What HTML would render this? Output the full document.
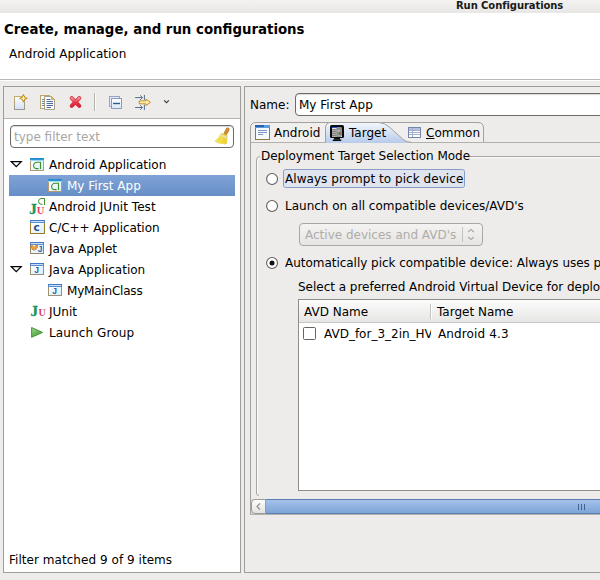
<!DOCTYPE html>
<html>
<head>
<meta charset="utf-8">
<title>Run Configurations</title>
<style>
html,body{margin:0;padding:0}
body{width:600px;height:580px;position:relative;overflow:hidden;background:#edeceb;
 font-family:"DejaVu Sans","Liberation Sans",sans-serif;font-size:12px;color:#000;line-height:14px}
.abs{position:absolute}
.t{position:absolute;white-space:nowrap;line-height:14px;height:14px}
#titlebar{left:0;top:0;width:600px;height:13px;background:linear-gradient(#f3f2f1,#e8e7e5)}
#title{left:456px;top:0px;letter-spacing:-.08px;font-weight:bold;font-size:10px;line-height:12px;color:#1a1a1a}
#banner{left:0;top:13px;width:600px;height:66px;background:#fff}
#bannerline{left:0;top:79px;width:600px;height:1px;background:#bcbab7}
#bannerline2{left:0;top:80px;width:600px;height:1px;background:#fff}
#h1{left:4px;top:22px;font-weight:bold;font-size:13.33px;line-height:16px;height:16px}
#h2{left:9px;top:47px}
.panel{border:1px solid #9f9d9a;box-sizing:border-box}
#left{left:3px;top:86px;width:238px;height:487px;background:#edeceb}
#leftwhite{left:1px;top:32px;width:235px;height:453px;background:#fff;border-top:1px solid #b5b3b0;margin-top:-1px}
#right{left:244px;top:86px;width:360px;height:487px}
.entry{border:1px solid #6c6b69;border-radius:4px;background:#fff;box-sizing:border-box;box-shadow:inset 0 1px 1px rgba(0,0,0,.16)}
.row{position:absolute;left:0;width:235px;height:21px}
.row .t{top:3px}
.sel{position:absolute;left:5px;width:227px;top:0;height:21px;background:linear-gradient(#83a6d8,#6b92c9)}
</style>
</head>
<body>
<div id="titlebar" class="abs"></div>
<div id="title" class="t">Run Configurations</div>
<div id="banner" class="abs"></div>
<div id="bannerline" class="abs"></div>
<div id="bannerline2" class="abs"></div>
<div id="h1" class="t">Create, manage, and run configurations</div>
<div id="h2" class="t">Android Application</div>

<!-- LEFT PANEL -->
<div id="left" class="abs panel"></div>
<div class="abs" style="left:4px;top:118px;width:236px;height:1px;background:#b4b2af"></div>
<div class="abs" style="left:4px;top:119px;width:236px;height:453px;background:#fff"></div>

<!-- toolbar icons -->
<svg class="abs" style="left:12px;top:92px" width="18" height="20" viewBox="0 0 18 20">
 <defs><linearGradient id="gdoc" x1="0" y1="0" x2="0" y2="1"><stop offset="0" stop-color="#ffffff"/><stop offset="1" stop-color="#d3e0f6"/></linearGradient>
 <linearGradient id="gdocb" x1="0" y1="0" x2="0" y2="1"><stop offset="0" stop-color="#c2ae73"/><stop offset="1" stop-color="#9c9686"/></linearGradient></defs>
 <rect x="2.5" y="4.5" width="10" height="13" fill="url(#gdoc)" stroke="url(#gdocb)"/>
 <path d="M11.400 2.400 L12.600 5.100 L15.300 6.300 L12.600 7.500 L11.400 10.200 L10.200 7.500 L7.500 6.300 L10.200 5.100 Z" fill="#d6a72a" stroke="#b8890f" stroke-width=".8"/>
 <path d="M11.400 4.300 V8.300 M9.400 6.300 H13.400" stroke="#fff6d0" stroke-width="1.100"/>
</svg>
<svg class="abs" style="left:38px;top:92px" width="20" height="20" viewBox="0 0 20 20">
 <rect x="2.5" y="3.5" width="9" height="13" fill="#f4f7fc" stroke="#b9a66f"/>
 <path d="M4 7.5h5M4 9.5h5M4 11.5h5M4 13.5h5" stroke="#6d86b3" stroke-width="1"/>
 <path d="M6.5 4.500 H13.500 L16.500 7.500 V17.500 H6.500 Z" fill="#fbfcfe" stroke="#a9a184"/>
 <path d="M13.5 4.500 L16.500 7.500 H13.500 Z" fill="#dcb35a" stroke="#c09a45" stroke-width=".6"/>
 <path d="M8.500 7.500h4M8.500 9.500h6.500M8.500 11.500h6.500M8.500 13.500h6.500M8.500 15.500h4.500" stroke="#4f6da3" stroke-width="1.100"/>
</svg>
<svg class="abs" style="left:67px;top:94px" width="17" height="16" viewBox="0 0 17 16">
 <defs><linearGradient id="gx" x1="0" y1="0" x2="0" y2="1"><stop offset="0" stop-color="#f78a94"/><stop offset=".5" stop-color="#ee3a4c"/><stop offset="1" stop-color="#dc2236"/></linearGradient></defs>
 <path d="M4.700 4.200 L12.300 11.800 M12.300 4.200 L4.700 11.800" stroke="#d22a3c" stroke-width="4" stroke-linecap="round"/>
 <path d="M4.700 4.200 L12.300 11.800 M12.300 4.200 L4.700 11.800" stroke="url(#gx)" stroke-width="2.600" stroke-linecap="round"/>
</svg>
<div class="abs" style="left:94px;top:93px;width:1px;height:18px;background:#b3b1ae"></div>
<div class="abs" style="left:95px;top:93px;width:1px;height:18px;background:#fbfbfa"></div>
<svg class="abs" style="left:107px;top:94px" width="18" height="17" viewBox="0 0 18 17">
 <defs><linearGradient id="gsq" x1="0" y1="0" x2="0" y2="1"><stop offset="0" stop-color="#ffffff"/><stop offset="1" stop-color="#dbe6f7"/></linearGradient></defs>
 <rect x="2.500" y="2.500" width="10" height="10" fill="#e4ebf8" stroke="#98a3c4"/>
 <rect x="4.500" y="4.500" width="10" height="10" fill="url(#gsq)" stroke="#8d99bd"/>
 <rect x="6" y="8.800" width="7" height="1.400" fill="#24599a"/>
</svg>
<svg class="abs" style="left:133px;top:93px" width="20" height="19" viewBox="0 0 20 19">
 <path d="M2.100 4.600h7M7.200 2.400l2.300 2.200L7.200 6.800M11.400 1.900v5" fill="none" stroke="#52708f" stroke-width="1"/>
 <path d="M2.100 14.500h7M7.200 12.300l2.300 2.200L7.200 16.700M11.400 11.700v5.300" fill="none" stroke="#52708f" stroke-width="1"/>
 <path d="M6.300 7.900h6.600V6.200L17.500 9.350 12.900 12.500V10.800H6.300Z" fill="#fdeebb" stroke="#c98d14" stroke-width="1"/>
</svg>
<svg class="abs" style="left:162px;top:98px" width="9" height="7" viewBox="0 0 9 7">
 <path d="M2.100 2.400 L4.500 4.600 L6.900 2.400" fill="none" stroke="#3a3a3a" stroke-width="1.150"/>
</svg>

<!-- filter box -->
<div class="abs entry" style="left:10px;top:125px;width:224px;height:23px"></div>
<div class="t" style="left:14px;top:130px;color:#a8a7a5">type filter text</div>
<svg class="abs" style="left:213px;top:126px" width="20" height="21" viewBox="0 0 20 21">
 <defs><linearGradient id="gbr" x1="0" y1="0" x2="1" y2="0"><stop offset="0" stop-color="#f6ea62"/><stop offset=".5" stop-color="#f3e047"/><stop offset="1" stop-color="#e9d03a"/></linearGradient></defs>
 <path d="M14.700 3.300 L12.200 8" stroke="#b07420" stroke-width="3.600" stroke-linecap="round"/>
 <path d="M14.700 3.300 L12.200 8" stroke="#cd9236" stroke-width="2.400" stroke-linecap="round"/>
 <path d="M8.400 7.200 L14.300 9.800 L14 13 L13.600 17.600 Q11.500 18.400 9.800 17.400 Q6 17.800 2 15.200 Q6.500 11.500 8.400 7.200 Z" fill="url(#gbr)" stroke="#e6cf3a" stroke-width=".6"/>
 <path d="M7.800 9.100 L14 11.600" stroke="#e9dcea" stroke-width="1.500"/>
 <path d="M8 11.500 L5 16 M10 12.300 L9 17 M12 13 L12.300 17.300" stroke="#e2c936" stroke-width=".6" fill="none"/>
</svg>

<!-- tree -->
<div class="abs" style="left:9px;top:175px;width:226px;height:21px;background:linear-gradient(#7fa3d6,#678ec6)"></div>

<svg class="abs" style="left:10px;top:160px" width="13" height="8" viewBox="0 0 13 8"><path d="M1.300 1.600 H11.200 L6.250 6.600 Z" fill="#fff" stroke="#000" stroke-width="1.250" stroke-linejoin="miter"/></svg>
<svg class="abs" style="left:10px;top:265px" width="13" height="8" viewBox="0 0 13 8"><path d="M1.300 1.600 H11.200 L6.250 6.600 Z" fill="#fff" stroke="#000" stroke-width="1.250" stroke-linejoin="miter"/></svg>

<svg width="0" height="0" style="position:absolute">
 <defs>
  <linearGradient id="gtb" x1="0" y1="0" x2="0" y2="1"><stop offset="0" stop-color="#1c84c6"/><stop offset=".55" stop-color="#2f9ad6"/><stop offset=".6" stop-color="#8fd6f0"/><stop offset="1" stop-color="#9fdcf2"/></linearGradient>
  <linearGradient id="gtb2" x1="0" y1="0" x2="0" y2="1"><stop offset="0" stop-color="#3b74c4"/><stop offset="1" stop-color="#5f92d6"/></linearGradient>
  <linearGradient id="gbody" x1="0" y1="0" x2="1" y2="1"><stop offset="0" stop-color="#ffffff"/><stop offset="1" stop-color="#d6eefb"/></linearGradient>
  <g id="icoAndroid">
   <rect x=".5" y="2.500" width="13" height="10" fill="url(#gbody)" stroke="#b89a72"/>
   <rect x="0" y="0" width="14" height="3" fill="url(#gtb)"/>
   <path d="M10.500 11 V4.300 H7.300 C4.600 4.300 3.600 6 3.600 7.450 C3.600 8.900 4.600 10.600 7.300 10.600 H8.600" fill="none" stroke="#3d8f28" stroke-width="1.100"/>
  </g>
  <g id="icoJava">
   <rect x=".5" y="2.500" width="13" height="9" fill="url(#gbody)" stroke="#9c8f78"/>
   <rect x="0" y="0" width="14" height="3" fill="url(#gtb2)"/>
   <rect x="1" y="1" width="12" height="1" fill="#dbe8f8" opacity=".9"/>
   <text x="6.700" y="10.300" font-family="'Liberation Sans',sans-serif" font-weight="bold" font-size="8.500" fill="#2b5da6" text-anchor="middle">J</text>
  </g>
  <g id="icoC">
   <rect x=".5" y="2.500" width="14" height="11" fill="url(#gbody)" stroke="#9c7c26"/>
   <rect x="0" y="0" width="15" height="3" fill="url(#gtb2)"/>
   <rect x="1" y="1" width="13" height="1" fill="#dbe8f8" opacity=".9"/>
   <text x="6.700" y="11.200" font-family="'DejaVu Sans','Liberation Sans',sans-serif" font-weight="bold" font-size="10.500" fill="#2a4f86" text-anchor="middle">c</text>
  </g>
 </defs>
</svg>

<svg class="abs" style="left:30px;top:158px" width="14" height="13"><use href="#icoAndroid"/></svg>
<svg class="abs" style="left:48px;top:179px" width="14" height="13"><use href="#icoAndroid"/></svg>
<!-- android junit -->
<svg class="abs" style="left:28px;top:196px" width="19" height="21" viewBox="0 0 19 21">
 <text x="1.300" y="18" font-family="'Liberation Serif',serif" font-weight="bold" font-size="15" fill="#1b9457" stroke="#1b9457" stroke-width=".35">J</text>
 <text x="8.800" y="18" font-family="'Liberation Serif',serif" font-weight="bold" font-size="10.500" fill="#ee3f59">U</text>
 <path d="M16.500 9 V2.500 H13 Q10.500 2.800 10.500 5.400 Q10.500 8 13 8.300 H14.500" fill="#fff" stroke="#3d8f28" stroke-width="1"/>
</svg>
<svg class="abs" style="left:30px;top:220px" width="15" height="14"><use href="#icoC"/></svg>
<!-- java applet -->
<svg class="abs" style="left:30px;top:242px" width="14" height="12" viewBox="0 0 14 12">
 <rect x=".5" y="2.500" width="13" height="9" fill="url(#gbody)" stroke="#94846a"/>
 <rect x="0" y="0" width="14" height="3" fill="url(#gtb2)"/>
 <rect x="1" y="1" width="12" height="1" fill="#dbe8f8" opacity=".9"/>
 <path d="M.8 3.300 h1.800 l.9 1.300 h1.200 l.9 -1.300 h2 v2.300 l-1.400 .7 v1.300 h-1.300 l-.8 .9 l-.8 -.9 h-1.300 v-1.300 l-1.200 -.7 Z" fill="#eaa243" stroke="#b0691c" stroke-width=".6"/>
 <rect x="3.300" y="3" width="1.600" height="1.300" fill="#fff"/>
 <text x="10.200" y="10.300" font-family="'Liberation Sans',sans-serif" font-weight="bold" font-size="8.500" fill="#2b5da6" text-anchor="middle">J</text>
</svg>
<svg class="abs" style="left:30px;top:263px" width="14" height="12"><use href="#icoJava"/></svg>
<svg class="abs" style="left:48px;top:284px" width="14" height="12"><use href="#icoJava"/></svg>
<!-- junit -->
<svg class="abs" style="left:29px;top:300px" width="19" height="19" viewBox="0 0 19 19">
 <text x="1.500" y="16" font-family="'Liberation Serif',serif" font-weight="bold" font-size="15" fill="#1b9457" stroke="#1b9457" stroke-width=".35">J</text>
 <text x="9.500" y="16" font-family="'Liberation Serif',serif" font-weight="bold" font-size="10" fill="#d8475c">U</text>
</svg>
<!-- launch group -->
<svg class="abs" style="left:30px;top:326px" width="15" height="13" viewBox="0 0 15 13">
 <defs><linearGradient id="gplay" x1="0" y1="0" x2=".6" y2="1"><stop offset="0" stop-color="#a2da8c"/><stop offset="1" stop-color="#469a38"/></linearGradient></defs>
 <path d="M1.600 1.500 L12.500 6.400 L1.600 11.300 Z" fill="url(#gplay)" stroke="#44963a" stroke-width="1" stroke-linejoin="round"/>
</svg>

<div class="t" style="left:49px;top:158px">Android Application</div>
<div class="t" style="left:67px;top:179px;color:#fff">My First App</div>
<div class="t" style="left:49px;top:200px;letter-spacing:.06px">Android JUnit Test</div>
<div class="t" style="left:49px;top:221px;letter-spacing:-.08px">C/C++ Application</div>
<div class="t" style="left:49px;top:242px">Java Applet</div>
<div class="t" style="left:49px;top:263px">Java Application</div>
<div class="t" style="left:67px;top:284px;letter-spacing:-.2px">MyMainClass</div>
<div class="t" style="left:49px;top:305px">JUnit</div>
<div class="t" style="left:49px;top:326px;letter-spacing:.12px">Launch Group</div>

<div class="t" style="left:9px;top:553px;letter-spacing:.045px">Filter matched 9 of 9 items</div>

<!-- RIGHT PANEL -->
<div id="right" class="abs panel"></div>
<div class="t" style="left:250px;top:98px">Name:</div>
<div class="abs entry" style="left:295px;top:93px;width:320px;height:23px"></div>
<div class="t" style="left:299px;top:98px">My First App</div>

<!-- tab folder -->
<svg class="abs" style="left:250px;top:122px" width="350" height="394" viewBox="0 0 350 394">
 <defs><linearGradient id="gtab" x1="0" y1="0" x2="0" y2="1"><stop offset="0" stop-color="#f4f7fc"/><stop offset="1" stop-color="#b7cbea"/></linearGradient></defs>
 <path d="M1 20 V6 Q1 1 6 1 H228 Q233 1 233 6 V20 Z" fill="#f0efee"/>
 <path d="M.5 392.500 V6 Q.5 .5 6 .5 H228 Q233.500 .5 233.500 6 V20.500" fill="none" stroke="#a3a19e"/>
 <path d="M1 20.500 H350" fill="none" stroke="#b3b1ae"/>
 <path d="M0 392.500 H350" fill="none" stroke="#b3b1ae"/>
 <path d="M75.500 21 V6 Q75.500 .5 81 .5 H128.500 Q134.500 .5 140 5.600 L153 17.300 Q156.500 20.500 162 20.500 V21 Z" fill="url(#gtab)"/>
 <path d="M75.500 21 V6 Q75.500 .5 81 .5 H128.500 Q134.500 .5 140 5.600 L153 17.300 Q156.500 20.500 162 20.500" fill="none" stroke="#a3a19e"/>
</svg>
<!-- tab: Android -->
<svg class="abs" style="left:255px;top:125px" width="15" height="15" viewBox="0 0 15 15">
 <rect x=".5" y="2.500" width="14" height="12" fill="#f3f9fe" stroke="#8c7a3e"/>
 <rect x="0" y="0" width="15" height="3" fill="#5d9be0"/>
 <rect x="0" y="0" width="9" height="2" fill="#2c5fae"/>
 <path d="M3 5.500h9M3 7.500h9M3 9.500h5" stroke="#7e97c6" stroke-width="1"/>
</svg>
<div class="t" style="left:274px;top:126px">Android</div>
<!-- tab: Target -->
<svg class="abs" style="left:330px;top:125px" width="15" height="16" viewBox="0 0 15 16">
 <rect x="0" y="0" width="14" height="13" rx="1.600" fill="#0a0a0a"/>
 <rect x="4" y="13" width="6" height="1.600" fill="#0a0a0a"/>
 <rect x="2.700" y="14.400" width="8.600" height="1.600" rx=".5" fill="#0a0a0a"/>
 <rect x="2" y="2" width="10" height="10" fill="#8c8c8c"/>
 <rect x="2" y="2" width="5" height="1.200" fill="#2456e0"/>
 <rect x="11" y="2" width="1" height="1.200" fill="#2456e0"/>
 <rect x="2" y="3.200" width="4.400" height="8.800" fill="#fff"/>
 <path d="M2 4.900h4.400M2 6.900h4.400M2 8.900h4.400M2 10.900h4.400" stroke="#1a1a1a" stroke-width=".9"/>
 <rect x="7.300" y="5" width="2.800" height="1.500" fill="#bdbdbd"/>
 <rect x="7" y="7.600" width="1.500" height="1.500" fill="#1fe01f"/>
 <rect x="9.100" y="7.600" width="1.500" height="1.500" fill="#f01616"/>
 <rect x="7.300" y="10.300" width="2.800" height="1" fill="#a9a9a9"/>
 <rect x="11" y="10.700" width="1" height="1" fill="#fff"/>
</svg>
<div class="t" style="left:349px;top:126px">Target</div>
<!-- tab: Common -->
<svg class="abs" style="left:408px;top:127px" width="13" height="11" viewBox="0 0 13 11">
 <rect x=".5" y=".5" width="12" height="10" fill="#fff" stroke="#7685ae"/>
 <rect x="1" y="1" width="11" height="2" fill="#b4bfda"/>
 <path d="M1 3.500h11M1 5.500h11M1 7.500h11M4.500 1v9" stroke="#a3afd0" stroke-width="1"/>
</svg>
<div class="t" style="left:426px;top:126px"><span style="text-decoration:underline">C</span>ommon</div>

<!-- group box -->
<svg class="abs" style="left:256px;top:156px" width="344" height="341" viewBox="0 0 344 341">
 <path d="M344 1.500 H5 Q1.500 1.500 1.500 5 V337.500 Q1.500 339.500 3.500 339.500" fill="none" stroke="#fbfbfa"/>
 <path d="M344 .5 H4 Q.5 .5 .5 4 V337 Q.5 339.500 3 339.500" fill="none" stroke="#a9a6a2"/>
</svg>
<div class="t" style="left:260px;top:149px;background:#edeceb;padding:0 0 0 1px;letter-spacing:-.03px">Deployment Target Selection Mode</div>

<!-- radios -->
<svg width="0" height="0" style="position:absolute"><defs>
 <radialGradient id="grad" cx=".5" cy=".4" r=".6"><stop offset="0" stop-color="#ffffff"/><stop offset="1" stop-color="#f1f1f0"/></radialGradient>
 <g id="radio"><circle cx="6.050" cy="6" r="5.450" fill="#fff" stroke="#615f5d" stroke-width="1.100"/></g>
</defs></svg>
<svg class="abs" style="left:266px;top:173px" width="13" height="13"><use href="#radio"/></svg>
<svg class="abs" style="left:266px;top:200px" width="13" height="13"><use href="#radio"/></svg>
<svg class="abs" style="left:266px;top:257px" width="13" height="13"><use href="#radio"/><circle cx="6" cy="6" r="2.500" fill="#111"/></svg>

<div class="abs" style="left:283px;top:169px;width:182px;height:19px;box-sizing:border-box;border:1px solid #879dc6;border-radius:2.500px;background:#dfe4ee"></div>
<div class="t" style="left:285px;top:172px;letter-spacing:.05px">Always prompt to pick device</div>
<div class="t" style="left:285px;top:199px">Launch on all compatible devices/AVD's</div>

<!-- disabled combo -->
<div class="abs" style="left:299px;top:223px;width:184px;height:23px;box-sizing:border-box;border:1px solid #a9a7a4;border-radius:4px;background:linear-gradient(#f4f3f2,#e6e5e3)"></div>
<div class="t" style="left:305px;top:228px;color:#aeaca9">Active devices and AVD's</div>
<div class="abs" style="left:462px;top:227px;width:1px;height:15px;background:#c4c2bf"></div>
<svg class="abs" style="left:466px;top:227px" width="10" height="15" viewBox="0 0 10 15">
 <path d="M2.200 5 L5 2.400 L7.800 5 M2.200 10 L5 12.600 L7.800 10" fill="none" stroke="#a5a3a0" stroke-width="1.100"/>
</svg>

<div class="t" style="left:285px;top:256px;letter-spacing:-.03px">Automatically pick compatible device: Always uses preferred AVD if set below, launches on compatible device/AVD otherwise.</div>
<div class="t" style="left:298px;top:280px;letter-spacing:-.02px">Select a preferred Android Virtual Device for deployment:</div>

<!-- table -->
<div class="abs" style="left:298px;top:299px;width:320px;height:192px;box-sizing:border-box;border:1px solid #8f8d8a;background:#fff"></div>
<div class="abs" style="left:299px;top:300px;width:301px;height:22px;background:linear-gradient(#fcfcfc,#e7e6e5);border-bottom:1px solid #c8c6c3"></div>
<div class="abs" style="left:430px;top:304px;width:1px;height:15px;background:#c4c2bf"></div>
<div class="abs" style="left:431px;top:304px;width:1px;height:15px;background:#fff"></div>
<div class="t" style="left:304px;top:305px">AVD Name</div>
<div class="t" style="left:437px;top:305px">Target Name</div>
<div class="abs" style="left:303px;top:327px;width:13px;height:13px;box-sizing:border-box;border:1px solid #676563;border-radius:1.500px;background:#fff"></div>
<div class="t" style="left:324px;top:327px;width:107px;overflow:hidden">AVD_for_3_2in_HVGA</div>
<div class="t" style="left:438px;top:327px;letter-spacing:.13px">Android 4.3</div>

<!-- scrollbar -->
<div class="abs" style="left:251px;top:499px;width:349px;height:15px;background:#d9d8d6"></div>
<div class="abs" style="left:251px;top:499px;width:15px;height:15px;box-sizing:border-box;border:1px solid #9d9b98;border-radius:4px 0 0 4px;background:linear-gradient(#fdfdfd,#e3e2e0)"></div>
<svg class="abs" style="left:254px;top:502px" width="9" height="9" viewBox="0 0 9 9"><path d="M6 1.300 L3 4.500 L6 7.700" fill="none" stroke="#8f8d8b" stroke-width="1.150"/></svg>
<div class="abs" style="left:266px;top:499px;width:340px;height:15px;box-sizing:border-box;border:1px solid #5b80b6;border-left:none;background:linear-gradient(#a5c2ea,#7ea4d6)"></div>
<div class="abs" style="left:578px;top:504px;width:1px;height:6px;background:#3f6196"></div>
<div class="abs" style="left:581px;top:504px;width:1px;height:6px;background:#3f6196"></div>
<div class="abs" style="left:584px;top:504px;width:1px;height:6px;background:#3f6196"></div>

</body>
</html>
